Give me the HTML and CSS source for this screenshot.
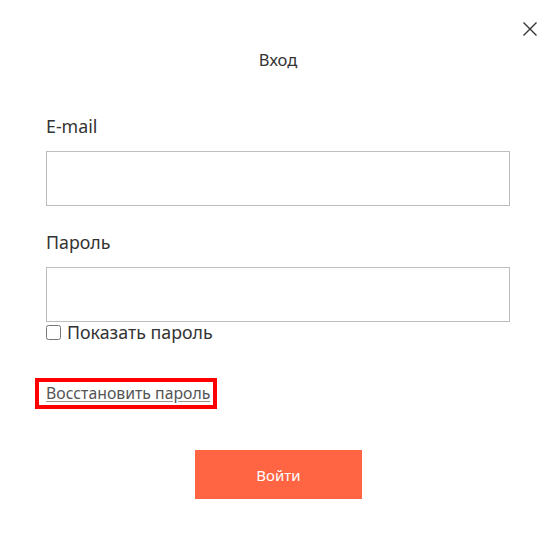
FILE: index.html
```html
<!DOCTYPE html>
<html lang="ru">
<head>
<meta charset="utf-8">
<title>Вход</title>
<link rel="stylesheet" href="styles.css">
</head>
<body>
<div class="modal">
  <button class="close" aria-label="Закрыть">
    <svg width="16" height="16" viewBox="0 0 16 16"><path d="M1.5 1.5 L14.5 14.5 M14.5 1.5 L1.5 14.5" stroke="#333" stroke-width="1.4" fill="none"/></svg>
  </button>
  <h1 class="title">Вход</h1>
  <form class="form">
    <label class="label" for="email">E-mail</label>
    <input class="input" id="email" type="text">
    <label class="label label-pass" for="pass">Пароль</label>
    <input class="input" id="pass" type="password">
    <label class="show"><input type="checkbox" class="check"><span>Показать пароль</span></label>
    <div class="restore-row"><a class="restore" href="#">Восстановить пароль</a></div>
    <div class="actions"><button type="button" class="submit">Войти</button></div>
  </form>
</div>
</body>
</html>
```
FILE: styles.css
```css
* { box-sizing: border-box; }
html, body { margin: 0; background: #fff; }
body {
  font-family: "Noto Sans", "Liberation Sans", sans-serif;
  color: #333;
  width: 552px;
  height: 549px;
  overflow: hidden;
}
.modal {
  position: relative;
  padding: 48px 42px 0 46px;
}
.close {
  position: absolute;
  top: 21px;
  right: 14px;
  width: 16px;
  height: 16px;
  padding: 0;
  border: 0;
  background: none;
  display: flex;
}
.title {
  margin: 0;
  text-align: center;
  font-size: 16.5px;
  font-weight: 400;
  line-height: 24px;
  color: #333;
}
.form {
  display: flex;
  flex-direction: column;
  margin-top: 42px;
}
.label {
  font-size: 17.8px;
  line-height: 24px;
  color: #333;
}
.label-pass { margin-top: 24px; }
.input {
  margin-top: 13px;
  width: 464px;
  height: 55px;
  border: 1px solid #bdbdbd;
  border-radius: 0;
  background: #fff;
  font: inherit;
}
.show {
  display: flex;
  align-items: center;
  gap: 6px;
  font-size: 17.8px;
  line-height: 20px;
  color: #333;
}
.check {
  margin: 0;
  width: 15px;
  height: 15px;
}
.restore-row {
  display: flex;
  margin-top: 36px;
  margin-left: -11px;
}
.restore {
  border: 4px solid #ff0000;
  padding: 2px 3px 3px 7px;
  font-size: 15.8px;
  line-height: 18px;
  color: #555;
  text-decoration: underline;
  text-decoration-color: #999;
  text-underline-offset: 2px;
}
.actions {
  display: flex;
  justify-content: center;
  margin-top: 41px;
  margin-left: 1px;
}
.submit {
  width: 167px;
  height: 49px;
  border: 0;
  background: #ff6542;
  color: #fff;
  font-family: inherit;
  font-size: 15px;
}
```
